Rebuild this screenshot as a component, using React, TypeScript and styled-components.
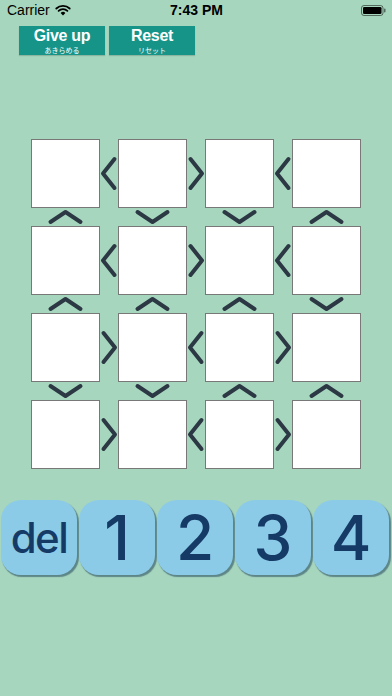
import React from "react";
import styled, { createGlobalStyle } from "styled-components";

const Global = createGlobalStyle`
  html, body { margin: 0; padding: 0; background: #a6d6bd; }
  #root { width: 392px; height: 696px; }
`;

const Screen = styled.div`
  width: 392px;
  height: 696px;
  background: #a6d6bd;
  display: flex;
  flex-direction: column;
  overflow: hidden;
  font-family: "Liberation Sans", Arial, sans-serif;
`;

const StatusBar = styled.div`
  height: 20px;
  display: grid;
  grid-template-columns: 1fr auto 1fr;
  align-items: center;
  padding: 0 6px 0 7px;
  font-size: 14px;
  color: #000;
`;

const Carrier = styled.div`
  display: flex;
  align-items: center;
  gap: 5px;
  font-family: "Liberation Sans", Arial, sans-serif;
`;

const Clock = styled.div`
  font-weight: 700;
  font-size: 14px;
`;

const BatteryWrap = styled.div`
  justify-self: end;
  display: flex;
  align-items: center;
`;

const TopBar = styled.div`
  display: flex;
  gap: 4px;
  padding-left: 19px;
  margin-top: 6px;
`;

const TealButton = styled.button`
  width: 86px;
  height: 29px;
  border: none;
  padding: 0;
  background: #179488;
  color: #fff;
  display: flex;
  flex-direction: column;
  align-items: center;
  justify-content: center;
  box-shadow: 0 1px 1px rgba(0, 0, 0, 0.15);
`;

const MainLabel = styled.span`
  font-family: "Liberation Sans", Arial, sans-serif;
  font-weight: 700;
  font-size: 16px;
  line-height: normal;
  letter-spacing: -0.3px;
`;

const SubLabel = styled.span`
  font-family: "Noto Sans CJK JP", sans-serif;
  font-size: 7px;
  line-height: normal;
`;

const Board = styled.div`
  margin-top: 84px;
  padding-left: 31px;
  display: grid;
  grid-template-columns: 69px 18px 69px 18px 69px 18px 69px;
  grid-template-rows: 69px 18px 69px 18px 69px 18px 69px;
`;

const Cell = styled.div`
  box-sizing: border-box;
  background: #fff;
  border: 1.5px solid #787878;
`;

const Slot = styled.div`
  display: flex;
  align-items: center;
  justify-content: center;
`;

const Keypad = styled.div`
  margin-top: 31px;
  padding-left: 1px;
  display: flex;
  gap: 2px;
`;

const Key = styled.button<{ $small?: boolean }>`
  width: 76px;
  height: 75px;
  border: none;
  padding: 0;
  border-radius: 20px;
  background: #8ccbe8;
  color: #163a66;
  box-shadow: 1.5px 2px 1px rgba(45, 80, 100, 0.6);
  display: flex;
  align-items: center;
  justify-content: center;
  font-family: Inter, "Noto Sans", sans-serif;
  font-weight: 500;
  font-size: ${(p) => (p.$small ? "42px" : "62px")};
  line-height: 1;
  letter-spacing: ${(p) => (p.$small ? "-1.5px" : "0")};
`;

type Dir = "<" | ">" | "^" | "v";

const Chevron: React.FC<{ dir: Dir }> = ({ dir }) => {
  const horizontal = dir === "<" || dir === ">";
  const w = horizontal ? 18 : 69;
  const h = horizontal ? 69 : 18;
  let pts = "";
  if (dir === "<") pts = "14.5,20 3,34.5 14.5,49";
  if (dir === ">") pts = "3.5,20 15,34.5 3.5,49";
  if (dir === "^") pts = "19.5,14 34.5,4 49.5,14";
  if (dir === "v") pts = "19.5,4 34.5,14 49.5,4";
  return (
    <svg width={w} height={h} viewBox={`0 0 ${w} ${h}`}>
      <polyline
        points={pts}
        fill="none"
        stroke="#2c3844"
        strokeWidth={4}
        strokeLinecap="round"
        strokeLinejoin="round"
      />
    </svg>
  );
};

const hRel: Dir[][] = [
  ["<", ">", "<"],
  ["<", ">", "<"],
  [">", "<", ">"],
  [">", "<", ">"],
];

const vRel: Dir[][] = [
  ["^", "v", "v", "^"],
  ["^", "^", "^", "v"],
  ["v", "v", "^", "^"],
];

const Wifi = () => (
  <svg width="16" height="12" viewBox="0 0 16 12">
    <path d="M8 11.5 L5.6 8.9 A3.5 3.5 0 0 1 10.4 8.9 Z" fill="#000" />
    <path d="M3.6 6.9 A6.3 6.3 0 0 1 12.4 6.9" fill="none" stroke="#000" strokeWidth="1.8" strokeLinecap="round" />
    <path d="M1.3 4.5 A9.6 9.6 0 0 1 14.7 4.5" fill="none" stroke="#000" strokeWidth="1.8" strokeLinecap="round" />
  </svg>
);

const Battery = () => (
  <svg width="25" height="11" viewBox="0 0 25 11">
    <rect x="0.5" y="0.5" width="21.5" height="10" rx="2.5" fill="none" stroke="#000" strokeWidth="1" opacity="0.5" />
    <rect x="2" y="2" width="18.5" height="7" rx="1.3" fill="#000" />
    <rect x="23" y="3.5" width="1.5" height="4" rx="0.7" fill="#000" opacity="0.5" />
  </svg>
);

export default function App() {
  const items: React.ReactNode[] = [];
  for (let r = 0; r < 4; r++) {
    for (let c = 0; c < 4; c++) {
      items.push(<Cell key={`c${r}${c}`} />);
      if (c < 3)
        items.push(
          <Slot key={`h${r}${c}`}>
            <Chevron dir={hRel[r][c]} />
          </Slot>
        );
    }
    if (r < 3) {
      for (let c = 0; c < 4; c++) {
        items.push(
          <Slot key={`v${r}${c}`}>
            <Chevron dir={vRel[r][c]} />
          </Slot>
        );
        if (c < 3) items.push(<Slot key={`e${r}${c}`} />);
      }
    }
  }

  return (
    <>
      <Global />
      <Screen>
        <StatusBar>
          <Carrier>
            Carrier <Wifi />
          </Carrier>
          <Clock>7:43 PM</Clock>
          <BatteryWrap>
            <Battery />
          </BatteryWrap>
        </StatusBar>
        <TopBar>
          <TealButton>
            <MainLabel>Give up</MainLabel>
            <SubLabel>あきらめる</SubLabel>
          </TealButton>
          <TealButton>
            <MainLabel>Reset</MainLabel>
            <SubLabel>リセット</SubLabel>
          </TealButton>
        </TopBar>
        <Board>{items}</Board>
        <Keypad>
          <Key $small>del</Key>
          <Key>1</Key>
          <Key>2</Key>
          <Key>3</Key>
          <Key>4</Key>
        </Keypad>
      </Screen>
    </>
  );
}
